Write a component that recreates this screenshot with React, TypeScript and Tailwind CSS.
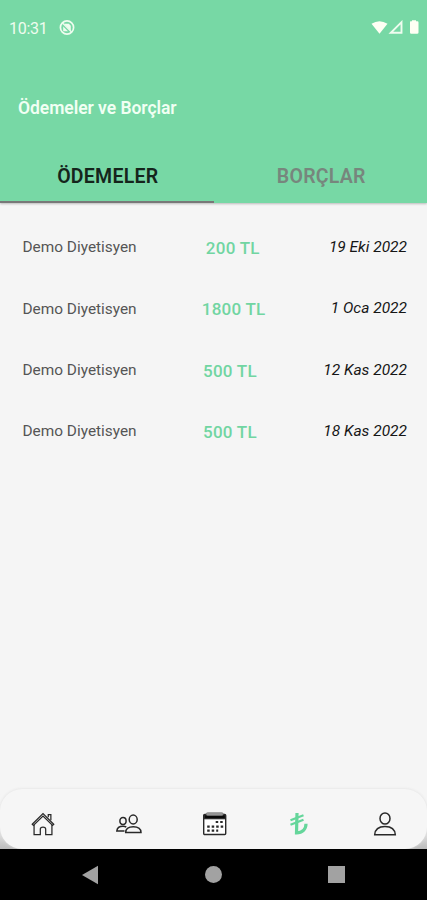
const payments = [
  { name: "Demo Diyetisyen", amount: "200 TL", date: "19 Eki 2022" },
  { name: "Demo Diyetisyen", amount: "1800 TL", date: "1 Oca 2022" },
  { name: "Demo Diyetisyen", amount: "500 TL", date: "12 Kas 2022" },
  { name: "Demo Diyetisyen", amount: "500 TL", date: "18 Kas 2022" },
];

function StatusBar() {
  return (
    <div className="flex h-[56px] items-center pl-[9px] pr-[7px] text-[#effcef]">
      <span className="pt-px text-[16px] leading-5 tracking-[-0.3px]">10:31</span>
      <svg className="ml-3 h-4 w-4" viewBox="0 0 16 16" fill="none" stroke="currentColor">
        <circle cx="8" cy="7.500" r="6.600" strokeWidth="1.700" />
        <path d="M5 3.800h4.800l2 2v5.200zM4.200 6.500v4.800h4.800z" fill="currentColor" stroke="none" />
        <path d="M3.500 3l9 9" strokeWidth="1.300" />
      </svg>
      <svg className="ml-auto h-4 w-[50px]" viewBox="0 0 50 16" fill="#fffff4">
        <path d="M1.500 3.700Q9.500-1.300 17.500 3.700L9.500 13.700Z" />
        <path d="M31.500 2.200V12.800H20.800Z" fill="none" stroke="#effcef" strokeWidth="1.900" />
        <path d="M40.500 1.300H42V.3h4v1h1.500Q48.500 1.300 48.500 2.500V12.500Q48.500 13.800 47.200 13.800H41.300Q40 13.800 40 12.500V2.500Q40 1.300 40.500 1.300Z" />
      </svg>
    </div>
  );
}

function HomeIcon() {
  return (
    <svg className="h-6 w-6" viewBox="-.5 0 25 24" fill="none" stroke="#292929" strokeWidth="1.300">
      <path d="M.8 12.300L12 1.200 23.200 12.300 22 13.500 12 3.700 2 13.500Z" />
      <path d="M2.700 13V23H9.200V17.500Q9.200 15.300 12 15.300T14.800 17.500V23H21.300V13M17.500 5V2.300H20.200V8" />
    </svg>
  );
}

function PeopleIcon() {
  return (
    <svg className="h-6 w-[26px]" viewBox="0 0 26 24" fill="none" stroke="#292929" strokeWidth="1.500">
      <ellipse cx="17.200" cy="7.500" rx="4" ry="4.400" />
      <path d="M9.700 20.500Q9.700 14.700 17.300 14.700T25 20.500Z" />
      <ellipse cx="7" cy="9" rx="3.100" ry="3.400" />
      <path d="M8.500 19.100H.8Q1.300 14.300 7 14.300Q9 14.300 10.300 15" />
    </svg>
  );
}

function CalendarIcon() {
  return (
    <svg className="h-6 w-6" viewBox="0 0 24 24" fill="none" stroke="#292929">
      <rect x=".7" y="2.500" width="22" height="20" rx="1" fill="white" strokeWidth="1.400" />
      <path d="M1.200 3h21v3.800h-21z" fill="#080808" />
      <rect x="3.200" y=".7" width="17" height="2.700" rx="1.300" fill="#999" stroke="#777" strokeWidth=".7" />
      <path d="M12.700 10h7.800M4.200 14.700h16M4.200 18.700h11" strokeWidth="2.200" strokeDasharray="2.500 2" />
    </svg>
  );
}

function LiraIcon() {
  return (
    <svg className="h-6 w-6" viewBox="0 0 24 24" fill="none" stroke="#65d69b">
      <path d="M9 1L8.500 20.800C14.500 20.800 18 17 18 11.800" strokeWidth="3.200" />
      <path d="M2.500 8.300L15.500 3.300M2.500 12.700L15.500 7.700" strokeWidth="2.300" />
    </svg>
  );
}

function ProfileIcon() {
  return (
    <svg className="h-6 w-6" viewBox="0 0 24 24" fill="none" stroke="#292929" strokeWidth="1.500">
      <ellipse cx="12" cy="6.500" rx="5" ry="5.600" />
      <path d="M1.700 22.800Q2.200 14.500 12 14.500T22.300 22.800Z" />
    </svg>
  );
}

export default function App() {
  return (
    <main className="flex h-[900px] w-[427px] flex-col overflow-hidden bg-[#f5f5f5] font-['Roboto',sans-serif]">
      <header className="h-[203px] shrink-0 bg-[#77d8a5] shadow-[0_1px_2px_#bbb]">
        <StatusBar />
        <h1 className="flex h-[103px] items-center pl-[18px] text-[17.500px] font-semibold leading-6 tracking-[-0.050px] text-[#f1fff3]">
          Ödemeler ve Borçlar
        </h1>
        <div className="grid h-[44px] grid-cols-2 text-center text-[19.500px] font-semibold leading-[35px] tracking-[0.250px]">
          <div className="border-b-2 border-[#787878] pl-[2px] text-[#15251c]">ÖDEMELER</div>
          <div className="pl-[2px] text-[#77867d]">BORÇLAR</div>
        </div>
      </header>

      <section className="flex flex-1 flex-col pt-[14px]">
        {payments.map((payment) => (
          <div key={payment.date} className="flex h-[61.400px] items-center justify-between pl-[22.500px] pr-[20px]">
            <span className="text-[15.400px] text-[#555]">{payment.name}</span>
            <span className="pt-[2px] text-[17px] font-medium tracking-[0.250px] text-[#71d5a2]">{payment.amount}</span>
            <span className="text-[15.500px] italic text-[#161616]">{payment.date}</span>
          </div>
        ))}
      </section>

      <div className="bg-linear-to-b from-[#f5f5f5] from-60% to-[#bbb]">
        <nav className="flex h-[60px] items-center justify-around rounded-[22px] bg-[#f6f6f6] pt-[9px] shadow-[0_0_3px_#ddd]">
          <HomeIcon />
          <PeopleIcon />
          <CalendarIcon />
          <LiraIcon />
          <ProfileIcon />
        </nav>
      </div>

      <footer className="grid h-[51px] shrink-0 grid-cols-[179px_69px_177px] items-center justify-items-center bg-black">
        <svg className="h-[20px] w-[18px]" viewBox="0 0 18 20" fill="#a2a2a2">
          <path d="M1 10L17 .8V19.200Z" />
        </svg>
        <div className="h-[17px] w-[17px] rounded-full bg-[#a2a2a2]" />
        <div className="h-[17px] w-[17px] bg-[#a2a2a2]" />
      </footer>
    </main>
  );
}
